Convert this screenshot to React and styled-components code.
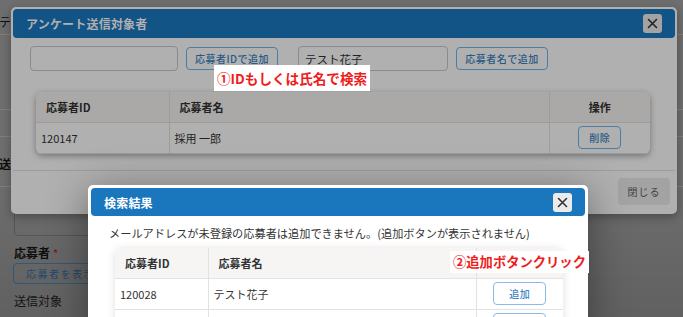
import styled, { createGlobalStyle, ThemeProvider } from "styled-components";

const GlobalStyle = createGlobalStyle`
	html, body {
		margin: 0;
		padding: 0;
		background: #6f6f6f;
	}
	body {
		width: 683px;
		height: 317px;
		overflow: hidden;
		font-family: "Noto Sans CJK JP", "Noto Sans", sans-serif;
		color: #333;
	}
	* {
		box-sizing: border-box;
	}
`;

// active dialog
const lit = {
	surface: "#ffffff",
	text: "#333333",
	strong: "#222222",
	line: "#e2e2e2",
	head: "#f6f5f3",
	brand: "#1a77be",
	btnBorder: "#5c9bd4",
	btnText: "#2f74b5",
	softBorder: "#8bbbe4",
	softText: "#3c84c6",
	inputBorder: "#c8c8c8",
	closeBg: "#ebebeb",
	greyBtn: "#ececec",
	greyText: "#555555",
};

// dialog behind the second backdrop
const dimmed = {
	surface: "#b0b0b0",
	text: "#232323",
	strong: "#181818",
	line: "#9c9c9c",
	head: "#aaa9a8",
	brand: "#135486",
	btnBorder: "#4d7ca5",
	btnText: "#285985",
	softBorder: "#4d7ca5",
	softText: "#285985",
	inputBorder: "#8b8b8b",
	closeBg: "#a3a3a3",
	greyBtn: "#a3a3a3",
	greyText: "#3e3e3e",
};

// page behind both backdrops
const page = {
	surface: "#6e6e6e",
	text: "#141414",
	strong: "#0e0e0e",
	line: "#7f7f7f",
	inputBorder: "#565656",
	btnBorder: "#2f5878",
	btnText: "#23496c",
	required: "#7a2222",
};

const registered = [{ id: "120147", name: "採用 一郎" }];
const results = [
	{ id: "120028", name: "テスト花子" },
	{ id: "", name: "" },
];

const CloseIcon = ({ color }) => (
	<svg width="11" height="11" viewBox="0 0 11 11">
		<path d="M1.5 1.5 L9.5 9.5 M9.5 1.5 L1.5 9.5" stroke={color} strokeWidth="1.6" strokeLinecap="round" />
	</svg>
);

const App = () => {
	return (
		<Stage>
			<GlobalStyle />

			<ThemeProvider theme={page}>
				<Page>
					<Band $h={35}>
						<PageLabel>テンプレート</PageLabel>
					</Band>
					<Band $h={75} />
					<Band $h={27} />
					<Band $h={50}>
						<PageLabel $bold>送信方法</PageLabel>
					</Band>
					<Form>
						<FakeInput />
						<FieldLabel>
							応募者<Req>*</Req>
						</FieldLabel>
						<ShowButton>応募者を表示する</ShowButton>
						<FieldText>送信対象</FieldText>
					</Form>
				</Page>
			</ThemeProvider>

			<ThemeProvider theme={dimmed}>
				<Dialog $left={11} $top={7} $w={666} $pad={2}>
					<DialogHeader $h={29}>
						<DialogTitle>アンケート送信対象者</DialogTitle>
						<CloseBox>
							<CloseIcon color={dimmed.text} />
						</CloseBox>
					</DialogHeader>
					<SearchBody>
						<SearchRow>
							<TextInput $w={148} />
							<OutlineButton $w={92}>応募者IDで追加</OutlineButton>
							<Spacer />
							<TextInput $w={150}>テスト花子</TextInput>
							<OutlineButton $w={92}>応募者名で追加</OutlineButton>
						</SearchRow>
						<TableCard $w={614} $ml={6} $mt={21} $shadow="0 2px 6px rgba(0,0,0,0.35)">
							<Grid>
								<colgroup>
									<col style={{ width: 133 }} />
									<col style={{ width: 380 }} />
									<col style={{ width: 101 }} />
								</colgroup>
								<thead>
									<tr>
										<Th>応募者ID</Th>
										<Th>応募者名</Th>
										<Th $center>操作</Th>
									</tr>
								</thead>
								<tbody>
									{registered.map((r) => (
										<tr key={r.id}>
											<Td>{r.id}</Td>
											<Td>{r.name}</Td>
											<Td $center>
												<OutlineButton $w={43} $inline>
													削除
												</OutlineButton>
											</Td>
										</tr>
									))}
								</tbody>
							</Grid>
						</TableCard>
					</SearchBody>
					<Footer>
						<GreyButton>閉じる</GreyButton>
					</Footer>
				</Dialog>
			</ThemeProvider>

			<ThemeProvider theme={lit}>
				<Dialog $left={88} $top={185} $w={500} $pad={3} $lift>
					<DialogHeader $h={28}>
						<DialogTitle>検索結果</DialogTitle>
						<CloseBox>
							<CloseIcon color={lit.text} />
						</CloseBox>
					</DialogHeader>
					<Notice>メールアドレスが未登録の応募者は追加できません。(追加ボタンが表示されません)</Notice>
					<TableCard $w={448} $ml={24} $mt={7} $shadow="0 1px 8px rgba(0,0,0,0.13)">
						<Grid>
							<colgroup>
								<col style={{ width: 93 }} />
								<col style={{ width: 268 }} />
								<col style={{ width: 87 }} />
							</colgroup>
							<thead>
								<tr>
									<Th>応募者ID</Th>
									<Th>応募者名</Th>
									<Th />
								</tr>
							</thead>
							<tbody>
								{results.map((r, i) => (
									<tr key={i}>
										<Td>{r.id}</Td>
										<Td>{r.name}</Td>
										<Td $center>
											<OutlineButton $w={53} $inline $soft>
												追加
											</OutlineButton>
										</Td>
									</tr>
								))}
							</tbody>
						</Grid>
					</TableCard>
				</Dialog>
			</ThemeProvider>

			<Note $left={214} $top={65} $h={26} $size={13.6}>
				①IDもしくは氏名で検索
			</Note>
			<Note $left={450} $top={251} $h={22} $size={13.3}>
				②追加ボタンクリック
			</Note>
		</Stage>
	);
};

const Stage = styled.div`
	position: relative;
	width: 683px;
	height: 317px;
	overflow: hidden;
	background-color: #6e6e6e;
`;

const Page = styled.div`
	height: 317px;
	display: flex;
	flex-direction: column;
	background-color: ${({ theme }) => theme.surface};
	background-image: linear-gradient(180deg, rgba(0, 0, 0, 0) 55%, rgba(0, 0, 0, 0.12) 100%);
`;

const Band = styled.div`
	height: ${(p) => p.$h}px;
	border-bottom: 1px solid ${({ theme }) => theme.line};
	display: flex;
	align-items: flex-end;
	padding: 0 0 4px 0;
`;

const PageLabel = styled.span`
	margin-left: -1px;
	font-size: 12px;
	line-height: 16px;
	font-weight: ${(p) => (p.$bold ? 700 : 400)};
	color: ${({ theme }) => theme.strong};
	padding-bottom: ${(p) => (p.$bold ? 10 : 0)}px;
`;

const Form = styled.div`
	display: flex;
	flex-direction: column;
	align-items: flex-start;
	padding: 9px 0 0 14px;
`;

const FakeInput = styled.div`
	width: 300px;
	height: 40px;
	border: 1px solid ${({ theme }) => theme.inputBorder};
	border-radius: 4px;
`;

const FieldLabel = styled.div`
	margin-top: 9px;
	font-size: 12px;
	line-height: 16px;
	font-weight: 700;
	color: ${({ theme }) => theme.strong};
`;

const Req = styled.span`
	color: ${({ theme }) => theme.required};
	font-size: 10px;
	margin-left: 3px;
	vertical-align: top;
`;

const ShowButton = styled.div`
	margin-top: 2px;
	margin-left: -1px;
	height: 21px;
	padding: 0 12px;
	display: flex;
	align-items: center;
	border: 1px solid ${({ theme }) => theme.btnBorder};
	border-radius: 4px;
	color: ${({ theme }) => theme.btnText};
	font-size: 10px;
	letter-spacing: 1.5px;
`;

const FieldText = styled.div`
	margin-top: 9px;
	font-size: 12px;
	line-height: 16px;
	color: ${({ theme }) => theme.text};
`;

const Dialog = styled.div`
	position: absolute;
	left: ${(p) => p.$left}px;
	top: ${(p) => p.$top}px;
	width: ${(p) => p.$w}px;
	padding: ${(p) => p.$pad}px;
	background-color: ${({ theme }) => theme.surface};
	border-radius: 5px;
	display: flex;
	flex-direction: column;
	box-shadow: ${(p) => (p.$lift ? "0 6px 40px rgba(0,0,0,0.4)" : "0 3px 10px rgba(0,0,0,0.3)")};
	height: ${(p) => (p.$lift ? "160px" : "auto")};
`;

const DialogHeader = styled.div`
	height: ${(p) => p.$h}px;
	background-color: ${({ theme }) => theme.brand};
	border-radius: 4px;
	display: flex;
	align-items: center;
	justify-content: space-between;
	padding: 0 13px 0 13px;
`;

const DialogTitle = styled.span`
	color: ${({ theme }) => theme.surface};
	font-size: 12px;
	font-weight: 700;
	letter-spacing: 0.2px;
`;

const CloseBox = styled.div`
	width: 19px;
	height: 19px;
	border-radius: 3px;
	background-color: ${({ theme }) => theme.closeBg};
	display: grid;
	place-items: center;
`;

const SearchBody = styled.div`
	padding: 8px 0 0 17px;
`;

const SearchRow = styled.div`
	display: flex;
	align-items: center;
	gap: 8px;
`;

const Spacer = styled.div`
	width: 4px;
`;

const TextInput = styled.div`
	width: ${(p) => p.$w}px;
	height: 25px;
	border: 1px solid ${({ theme }) => theme.inputBorder};
	border-radius: 4px;
	padding: 0 6px;
	display: flex;
	align-items: center;
	font-size: 11.5px;
	color: ${({ theme }) => theme.text};
`;

const OutlineButton = styled.div`
	width: ${(p) => p.$w}px;
	height: 23px;
	border: 1px solid ${({ theme, $soft }) => ($soft ? theme.softBorder : theme.btnBorder)};
	border-radius: 4px;
	display: ${(p) => (p.$inline ? "inline-flex" : "flex")};
	align-items: center;
	justify-content: center;
	font-size: 10px;
	font-weight: 500;
	letter-spacing: 0.5px;
	color: ${({ theme, $soft }) => ($soft ? theme.softText : theme.btnText)};
	vertical-align: middle;
`;

const TableCard = styled.div`
	width: ${(p) => p.$w}px;
	margin-left: ${(p) => p.$ml}px;
	margin-top: ${(p) => p.$mt}px;
	border-radius: 6px;
	overflow: hidden;
	box-shadow: ${(p) => p.$shadow};
	background-color: ${({ theme }) => theme.surface};
`;

const Grid = styled.table`
	width: 100%;
	border-collapse: collapse;
	table-layout: fixed;

	tbody tr {
		height: 31px;
	}
	thead tr {
		height: 30px;
		background-color: ${({ theme }) => theme.head};
	}
	tr {
		border-bottom: 1px solid ${({ theme }) => theme.line};
	}
	td + td,
	th + th {
		border-left: 1px solid ${({ theme }) => theme.line};
	}
`;

const Th = styled.th`
	padding: 0 10px;
	text-align: ${(p) => (p.$center ? "center" : "left")};
	font-size: 11px;
	font-weight: 700;
	color: ${({ theme }) => theme.text};
`;

const Td = styled.td`
	padding: 0 5px;
	text-align: ${(p) => (p.$center ? "center" : "left")};
	font-size: 11px;
	color: ${({ theme }) => theme.text};
`;

const Footer = styled.div`
	margin-top: 16px;
	border-top: 1px solid ${({ theme }) => theme.line};
	padding: 7px 5px 7px 0;
	display: flex;
	justify-content: flex-end;
`;

const GreyButton = styled.div`
	width: 52px;
	height: 27px;
	border-radius: 4px;
	background-color: ${({ theme }) => theme.greyBtn};
	display: flex;
	align-items: center;
	justify-content: center;
	font-size: 10px;
	letter-spacing: 1px;
	color: ${({ theme }) => theme.greyText};
`;

const Notice = styled.div`
	padding: 9px 0 0 18px;
	font-size: 11.2px;
	line-height: 16px;
	color: ${({ theme }) => theme.text};
`;

const Note = styled.span`
	position: absolute;
	left: ${(p) => p.$left}px;
	top: ${(p) => p.$top}px;
	height: ${(p) => p.$h}px;
	line-height: ${(p) => p.$h}px;
	padding: 0 3px;
	background-color: #fff;
	color: #f01c1c;
	font-size: ${(p) => p.$size}px;
	font-weight: 700;
	white-space: nowrap;
`;

export default App;
